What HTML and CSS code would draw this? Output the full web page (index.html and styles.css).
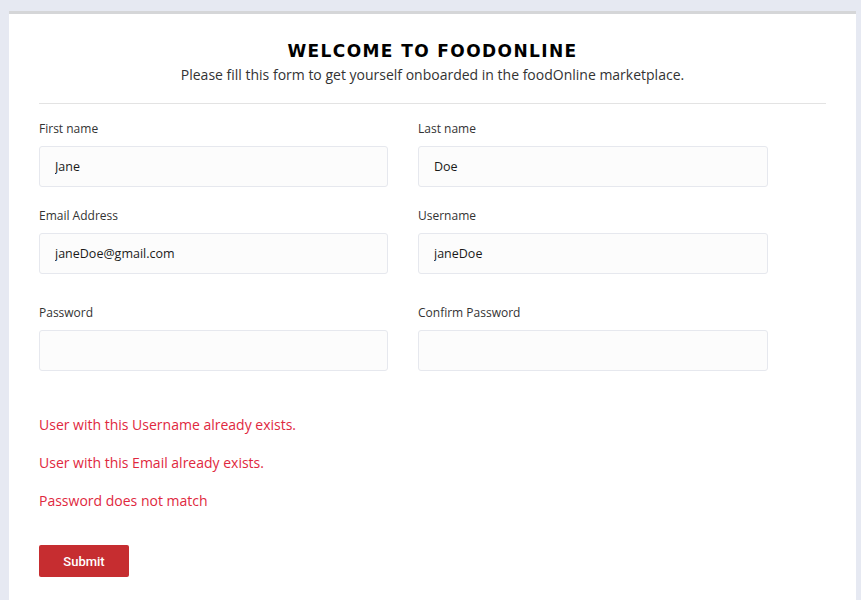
FILE: index.html
```html
<!DOCTYPE html>
<html>
<head>
<meta charset="utf-8">
<link rel="stylesheet" href="styles.css">
</head>
<body>
<div class="page">
  <div class="card">
    <div class="header">
      <h1 class="title">WELCOME TO FOODONLINE</h1>
      <p class="subtitle">Please fill this form to get yourself onboarded in the foodOnline marketplace.</p>
    </div>
    <hr class="divider">
    <form class="form">
      <div class="grid">
        <div class="field">
          <label class="label">First name</label>
          <input class="input" type="text" value="Jane">
        </div>
        <div class="field">
          <label class="label">Last name</label>
          <input class="input" type="text" value="Doe">
        </div>
        <div class="field">
          <label class="label">Email Address</label>
          <input class="input" type="text" value="janeDoe@gmail.com">
        </div>
        <div class="field">
          <label class="label">Username</label>
          <input class="input" type="text" value="janeDoe">
        </div>
        <div class="field field-pw">
          <label class="label">Password</label>
          <input class="input" type="password" value="">
        </div>
        <div class="field field-pw">
          <label class="label">Confirm Password</label>
          <input class="input" type="password" value="">
        </div>
      </div>
      <ul class="errors">
        <li>User with this Username already exists.</li>
        <li>User with this Email already exists.</li>
        <li>Password does not match</li>
      </ul>
      <button class="submit" type="button">Submit</button>
    </form>
  </div>
</div>
</body>
</html>
```
FILE: styles.css
```css
* { box-sizing: border-box; }
html, body {
  margin: 0;
  padding: 0;
  background: #e6e9f2;
  font-family: "Open Sans", "Liberation Sans", sans-serif;
}
.page {
  padding: 11px 5px 0 9px;
}
.card {
  background: #fff;
  border-top: 3px solid #d5d6d8;
  padding: 0 30px 40px 30px;
  min-height: 600px;
}
.header {
  text-align: center;
  padding-top: 24px;
}
.title {
  margin: 0;
  font-family: "DejaVu Sans", "Liberation Sans", sans-serif;
  font-weight: 700;
  font-size: 17px;
  letter-spacing: 1.4px;
  line-height: 26px;
  color: #000;
}
.subtitle {
  margin: 1px 0 0 0;
  font-size: 14px;
  line-height: 20px;
  color: #333;
}
.divider {
  border: 0;
  border-top: 1px solid #e3e3e3;
  margin: 18px 0 0 0;
}
.grid {
  display: grid;
  grid-template-columns: 349px 350px;
  column-gap: 30px;
  row-gap: 20px;
  padding-top: 16px;
}
.field {
  display: flex;
  flex-direction: column;
}
.field-pw {
  margin-top: 10px;
}
.label {
  font-size: 12px;
  line-height: 17px;
  color: #333;
  margin-bottom: 9px;
}
.input {
  height: 41px;
  border: 1px solid #e6e8ee;
  border-radius: 3px;
  background: #fcfcfc;
  padding: 0 15px;
  font-family: "Open Sans", "Liberation Sans", sans-serif;
  font-size: 12.5px;
  color: #1a1a1a;
  outline: none;
}
.errors {
  list-style: none;
  margin: 44px 0 0 0;
  padding: 0;
}
.errors li {
  font-size: 14px;
  line-height: 20px;
  color: #e0283e;
  margin-bottom: 18px;
}
.submit {
  margin-top: 16px;
  width: 90px;
  height: 32px;
  border: 0;
  border-radius: 2px;
  background: #c62d30;
  color: #fff;
  font-family: "Roboto", "Liberation Sans", sans-serif;
  font-weight: 500;
  font-size: 13px;
}
```
